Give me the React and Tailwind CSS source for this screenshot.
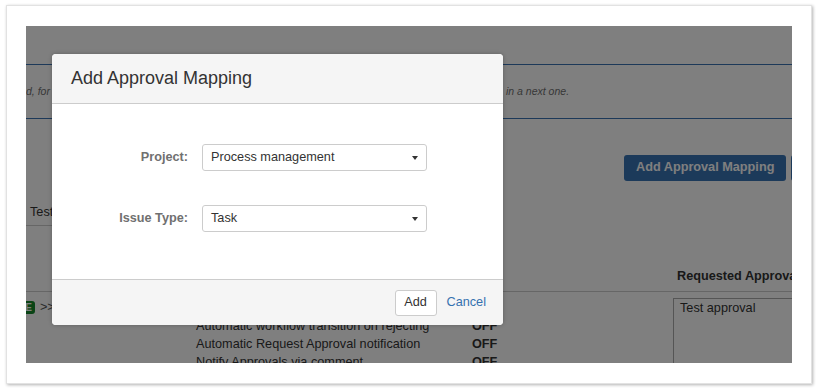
import React from "react";

const font = { fontFamily: '"Liberation Sans", Arial, sans-serif' };

function Caret() {
  return (
    <svg width="6" height="4" viewBox="0 0 6 4" className="shrink-0">
      <path d="M0 0 L6 0 L3 4 Z" fill="#333" />
    </svg>
  );
}

function FakeSelect({ value }) {
  return (
    <div className="h-[27px] w-[225px] flex items-center justify-between pl-[8px] pr-[8px] border border-[#ccc] rounded-[3px] bg-white text-[#333] text-[12.7px]">
      <span>{value}</span>
      <Caret />
    </div>
  );
}

export default function App() {
  return (
    <div className="w-[818px] h-[389px] bg-white pt-[5px] pl-[6px]" style={font}>
      <div className="w-[806px] h-[379px] bg-white border border-[#e2e2e2] shadow-[1px_1px_3px_rgba(0,0,0,0.3)] pt-[20px] pl-[19px]">
        <div className="relative w-[766px] h-[337px] overflow-hidden bg-white text-[#333] text-[12.7px]">
          {/* page content */}
          <div className="pt-[38px]">
            <div className="h-[55px] border-y border-[#3b73b3] grid grid-cols-[480px_auto] items-center italic text-[10.5px] text-[#707070] whitespace-nowrap">
              <div className="overflow-hidden">d, for example, if the approval is not granted in this step, it will be requested again</div>
              <div>in a next one.</div>
            </div>
            <div className="mt-[36px] flex gap-[5px] pl-[598px] whitespace-nowrap">
              <div className="h-[26px] px-[12px] flex items-center rounded-[3px] bg-[#3874b4] text-white font-bold text-[12.7px]">Add Approval Mapping</div>
              <div className="h-[26px] px-[12px] flex items-center rounded-[3px] bg-[#3874b4] text-white font-bold text-[12.7px]">Export</div>
            </div>
            <div className="mt-[19px] h-[26px] w-[300px] border-b border-[#ccc] flex items-center pl-[4px] text-[#333]">Test</div>
            <div className="h-[66px] border-b border-[#ccc] grid grid-cols-[170px_276px_201px_1fr] items-end pb-[5px] font-bold">
              <div></div>
              <div>Workflow Settings</div>
              <div></div>
              <div className="pl-[4px] whitespace-nowrap">Requested Approvals</div>
            </div>
            <div className="grid grid-cols-[170px_276px_201px_1fr] items-start pt-[6px] leading-[18px]">
              <div className="flex items-center whitespace-nowrap">
                <span className="-ml-[26px] h-[13px] px-[3px] rounded-[3px] bg-[#14892c] text-white text-[10px] font-bold leading-[13px]">DONE</span>
                <span className="ml-[5px] text-[#555]">&gt;&gt; Approved</span>
              </div>
              <div className="whitespace-nowrap pt-[1px]">
                <div>Automatic workflow transition on approving</div>
                <div>Automatic workflow transition on rejecting</div>
                <div>Automatic Request Approval notification</div>
                <div>Notify Approvals via comment</div>
              </div>
              <div className="font-bold pt-[1px]">
                <div>OFF</div>
                <div>OFF</div>
                <div>OFF</div>
                <div>OFF</div>
              </div>
              <div className="h-[80px] w-[200px] border border-[#aaa] px-[6px]">Test approval</div>
            </div>
          </div>

          {/* dimming overlay */}
          <div className="absolute inset-0 bg-black/50"></div>

          {/* modal */}
          <div className="absolute left-[26px] top-[28px] w-[451px] h-[271px] bg-white rounded-[4px] shadow-[0_0_4px_rgba(0,0,0,0.25)] flex flex-col overflow-hidden">
            <div className="h-[50px] shrink-0 bg-[#f5f5f5] border-b border-[#cccccc] flex items-center pl-[19px] text-[18px] text-[#333]">
              Add Approval Mapping
            </div>
            <div className="flex-1 pt-[40px]">
              <div className="grid grid-cols-[136px_225px] gap-x-[14px] gap-y-[34px] items-center">
                <div className="text-right font-bold text-[#707070] text-[12.7px]">Project:</div>
                <FakeSelect value="Process management" />
                <div className="text-right font-bold text-[#707070] text-[12.7px]">Issue Type:</div>
                <FakeSelect value="Task" />
              </div>
            </div>
            <div className="h-[46px] shrink-0 bg-[#f5f5f5] border-t border-[#cccccc] flex items-center justify-end gap-[10px] pr-[17px] text-[12.7px]">
              <div className="h-[26px] w-[42px] flex items-center justify-center bg-white border border-[#ccc] rounded-[3px] text-[#333]">Add</div>
              <div className="text-[#3572b0]">Cancel</div>
            </div>
          </div>
        </div>
      </div>
    </div>
  );
}
